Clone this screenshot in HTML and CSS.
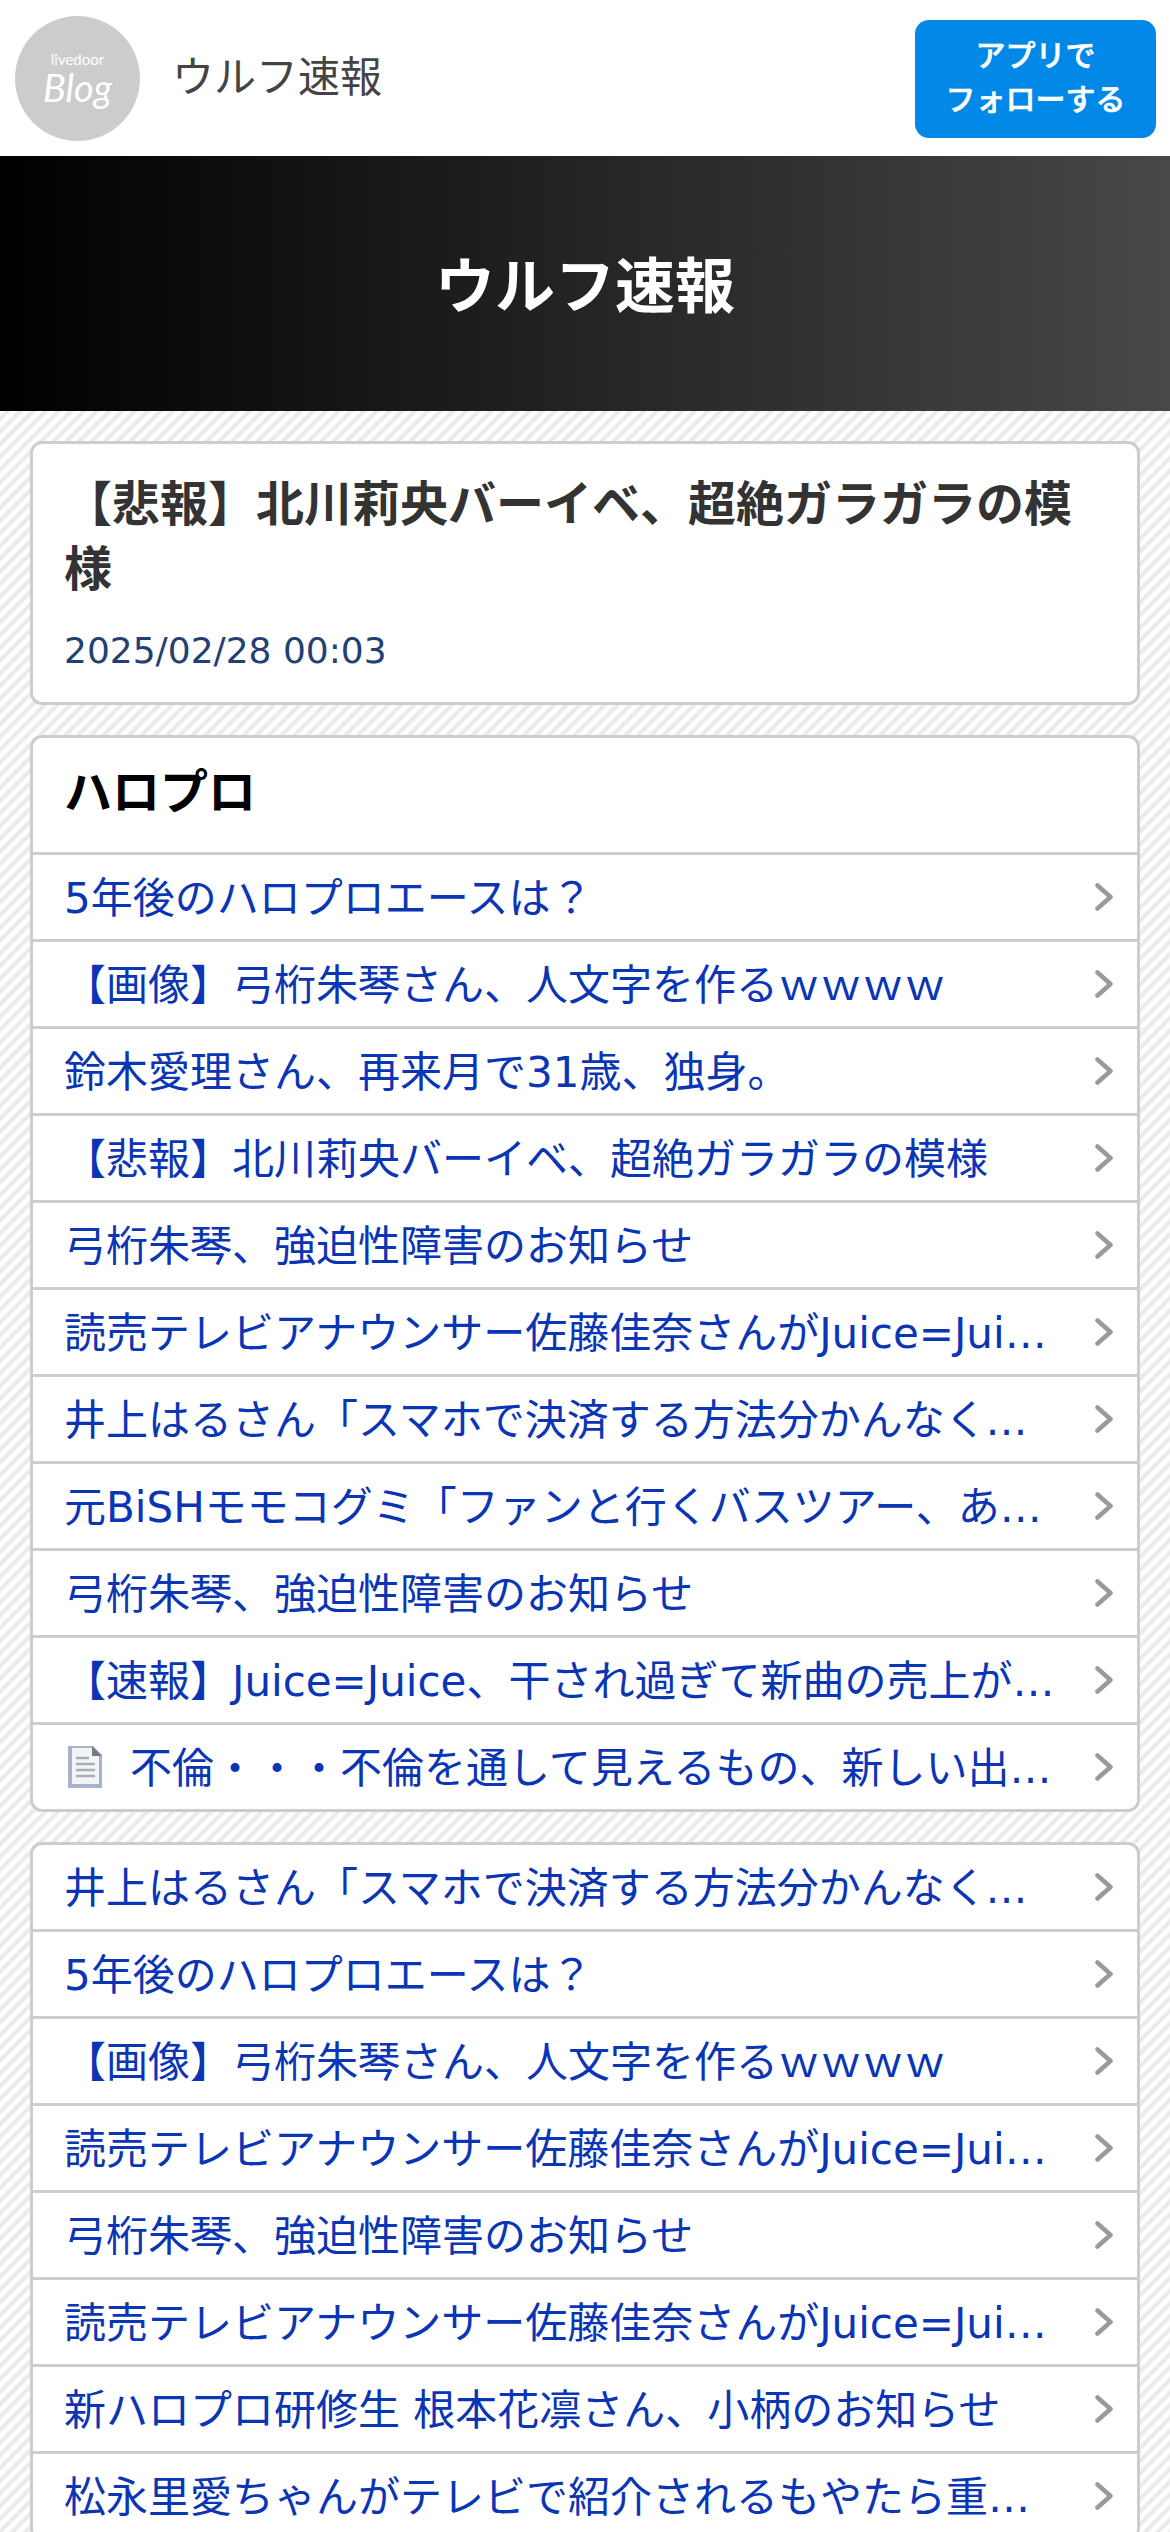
FILE: index.html
```html
<!DOCTYPE html>
<html lang="ja">
<head>
    <meta charset="UTF-8">
    <meta name="viewport" content="width=device-width, initial-scale=1.0">
    <title>ウルフ速報</title>
    <link rel="stylesheet" href="styles.css">
</head>
<body>
    <svg class="defs" width="0" height="0">
        <symbol id="chevron" viewBox="0 0 18 28">
            <path d="M2.5 2.5 L15.5 14 L2.5 25.5" fill="none" stroke="#9a9a9a" stroke-width="4.5" stroke-linecap="round" stroke-linejoin="round"/>
        </symbol>
    </svg>

    <header class="topbar">
        <div class="logo">
            <span class="logo-small">livedoor</span>
            <span class="logo-big">Blog</span>
        </div>
        <div class="site-name">ウルフ速報</div>
        <a class="follow" href="#">アプリで<br>フォローする</a>
    </header>

    <div class="hero">
        <h1>ウルフ速報</h1>
    </div>

    <main class="content">
        <section class="card article">
            <h2>【悲報】北川莉央バーイベ、超絶ガラガラの模様</h2>
            <div class="date">2025/02/28 00:03</div>
        </section>

        <section class="card">
            <h3 class="card-title">ハロプロ</h3>
            <ul class="links">
                <li><a href="#"><span class="txt">5年後のハロプロエースは？</span><svg class="chev"><use href="#chevron"/></svg></a></li>
                <li><a href="#"><span class="txt">【画像】弓桁朱琴さん、人文字を作るｗｗｗｗ</span><svg class="chev"><use href="#chevron"/></svg></a></li>
                <li><a href="#"><span class="txt">鈴木愛理さん、再来月で31歳、独身。</span><svg class="chev"><use href="#chevron"/></svg></a></li>
                <li><a href="#"><span class="txt">【悲報】北川莉央バーイベ、超絶ガラガラの模様</span><svg class="chev"><use href="#chevron"/></svg></a></li>
                <li><a href="#"><span class="txt">弓桁朱琴、強迫性障害のお知らせ</span><svg class="chev"><use href="#chevron"/></svg></a></li>
                <li><a href="#"><span class="txt">読売テレビアナウンサー佐藤佳奈さんがJuice=Juiceのファンだと話題に</span><svg class="chev"><use href="#chevron"/></svg></a></li>
                <li><a href="#"><span class="txt">井上はるさん「スマホで決済する方法分かんなくて困っている」</span><svg class="chev"><use href="#chevron"/></svg></a></li>
                <li><a href="#"><span class="txt">元BiSHモモコグミ「ファンと行くバスツアー、ある意味すごい」</span><svg class="chev"><use href="#chevron"/></svg></a></li>
                <li><a href="#"><span class="txt">弓桁朱琴、強迫性障害のお知らせ</span><svg class="chev"><use href="#chevron"/></svg></a></li>
                <li><a href="#"><span class="txt">【速報】Juice=Juice、干され過ぎて新曲の売上がとんでもない</span><svg class="chev"><use href="#chevron"/></svg></a></li>
                <li><a href="#">
                    <svg class="doc" viewBox="0 0 36 44">
                        <path d="M1 1 H26 L35 10 V43 H1 Z" fill="#a5b4c6"/>
                        <path d="M5 3 H25 L32 11 V39 H5 Z" fill="#f2f4f6"/>
                        <path d="M25 1 L35 11 L25 11 Z" fill="#76768c"/>
                        <path d="M9 13 H22 M9 19 H28 M9 25 H28 M9 31 H28" stroke="#a8aeb4" stroke-width="2.5"/>
                    </svg>
                    <span class="txt">不倫・・・不倫を通して見えるもの、新しい出会いとその先にあるもの</span><svg class="chev"><use href="#chevron"/></svg></a></li>
            </ul>
        </section>

        <section class="card">
            <ul class="links">
                <li><a href="#"><span class="txt">井上はるさん「スマホで決済する方法分かんなくて困っている」</span><svg class="chev"><use href="#chevron"/></svg></a></li>
                <li><a href="#"><span class="txt">5年後のハロプロエースは？</span><svg class="chev"><use href="#chevron"/></svg></a></li>
                <li><a href="#"><span class="txt">【画像】弓桁朱琴さん、人文字を作るｗｗｗｗ</span><svg class="chev"><use href="#chevron"/></svg></a></li>
                <li><a href="#"><span class="txt">読売テレビアナウンサー佐藤佳奈さんがJuice=Juiceのファンだと話題に</span><svg class="chev"><use href="#chevron"/></svg></a></li>
                <li><a href="#"><span class="txt">弓桁朱琴、強迫性障害のお知らせ</span><svg class="chev"><use href="#chevron"/></svg></a></li>
                <li><a href="#"><span class="txt">読売テレビアナウンサー佐藤佳奈さんがJuice=Juiceのファンだと話題に</span><svg class="chev"><use href="#chevron"/></svg></a></li>
                <li><a href="#"><span class="txt">新ハロプロ研修生 根本花凛さん、小柄のお知らせ</span><svg class="chev"><use href="#chevron"/></svg></a></li>
                <li><a href="#"><span class="txt">松永里愛ちゃんがテレビで紹介されるもやたら重い話になってしまう</span><svg class="chev"><use href="#chevron"/></svg></a></li>
            </ul>
        </section>
    </main>
</body>
</html>
```

FILE: styles.css
```css
* {
    box-sizing: border-box;
}
html, body {
    height: 2532px;
    overflow: hidden;
}
body {
    margin: 0;
    font-family: "DejaVu Sans", "Noto Sans CJK JP", sans-serif;
    background-color: #fff;
}
a {
    text-decoration: none;
}
ul {
    list-style: none;
    margin: 0;
    padding: 0;
}
.defs {
    display: block;
    height: 0;
}

/* top bar */
.topbar {
    display: flex;
    align-items: center;
    height: 156px;
    padding: 0 14px 0 15px;
    background: #fff;
}
.logo {
    display: flex;
    flex-direction: column;
    align-items: center;
    justify-content: center;
    width: 125px;
    height: 125px;
    border-radius: 50%;
    background: #cccccc;
    color: #fff;
    font-family: Lato, sans-serif;
}
.logo-small {
    font-size: 15px;
    line-height: 18px;
}
.logo-big {
    font-size: 38px;
    line-height: 38px;
    font-style: italic;
}
.site-name {
    flex: 1;
    margin-left: 32px;
    padding-bottom: 10px;
    font-size: 42px;
    color: #444;
}
.follow {
    width: 241px;
    height: 118px;
    margin-top: 1px;
    padding-top: 14px;
    border-radius: 14px;
    background: #0288e6;
    color: #fff;
    font-size: 30px;
    font-weight: 500;
    -webkit-text-stroke: 0.6px #fff;
    line-height: 44px;
    text-align: center;
}

/* blog title */
.hero {
    display: flex;
    align-items: center;
    justify-content: center;
    height: 255px;
    padding-bottom: 4px;
    background: linear-gradient(to right, #000, #484848);
}
.hero h1 {
    margin: 0;
    color: #fff;
    font-size: 60px;
    font-weight: bold;
}

/* striped page */
.content {
    display: flex;
    flex-direction: column;
    gap: 30px;
    padding: 30px 30px 0;
    background: repeating-linear-gradient(135deg, #fff 0, #fff 2px, #e8e8e8 5px, #e8e8e8 6px, #fff 9px);
}
.card {
    border: 3px solid #cdcdcd;
    border-radius: 12px;
    background: #fff;
    overflow: hidden;
}
.article {
    padding: 28px 31px 26px;
}
.article h2 {
    margin: 0;
    color: #333;
    font-size: 48px;
    font-weight: bold;
    line-height: 65px;
}
.date {
    margin-top: 24px;
    color: #234072;
    font-size: 36px;
    line-height: 50px;
}
.card-title {
    height: 114px;
    margin: 0;
    padding: 0 31px;
    color: #000;
    font-size: 48px;
    font-weight: bold;
    line-height: 108px;
}

/* link rows */
.links li {
    border-top: 3px solid #cdcdcd;
}
.card > .links:first-child li:first-child {
    border-top: 0;
}
.links a {
    display: flex;
    align-items: center;
    height: 84px;
    padding: 0 24px 0 31px;
    color: #0a35b5;
    font-size: 42px;
}
.txt {
    flex: 1;
    min-width: 0;
    padding-bottom: 6px;
    overflow: hidden;
    white-space: nowrap;
    text-overflow: ellipsis;
}
.chev {
    flex: none;
    width: 18px;
    height: 28px;
    margin-left: 35px;
}
.doc {
    flex: none;
    width: 36px;
    height: 44px;
    margin-left: 3px;
    margin-right: 27px;
}
```
